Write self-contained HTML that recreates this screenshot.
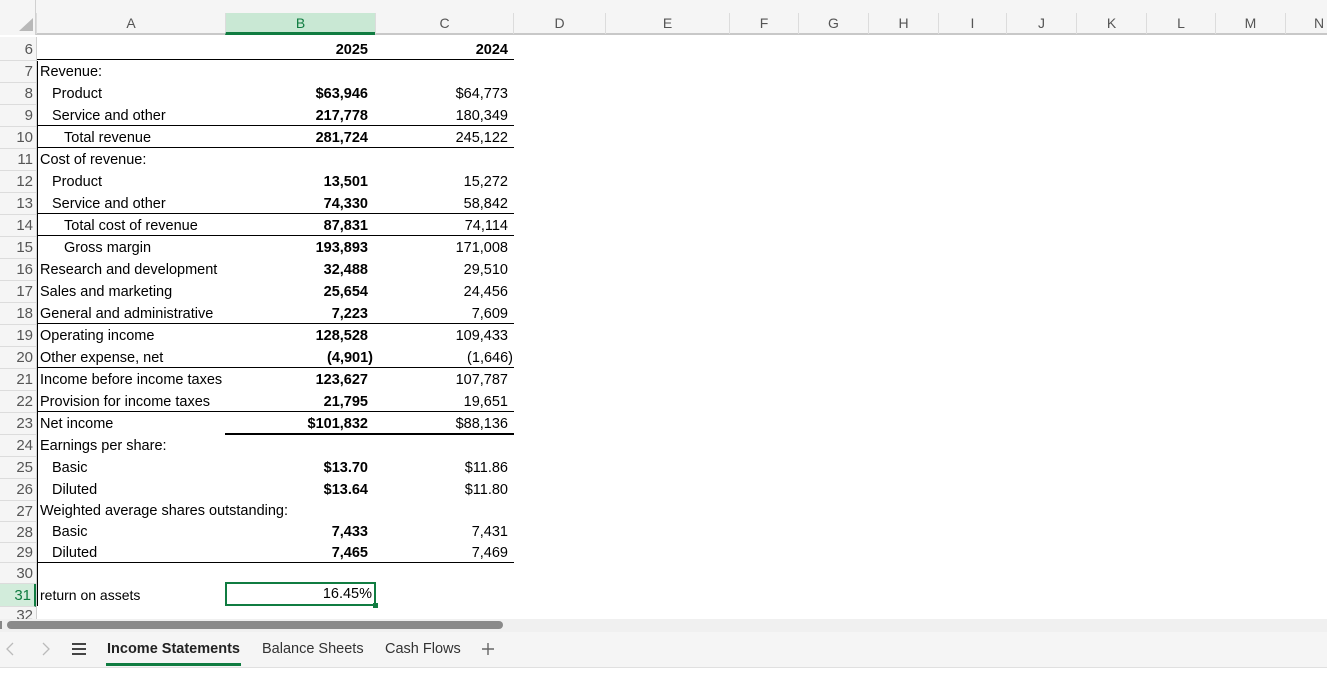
<!DOCTYPE html>
<html><head><meta charset="utf-8"><style>
*{margin:0;padding:0;box-sizing:border-box}
body{width:1327px;height:674px;overflow:hidden;background:#fff;font-family:"Liberation Sans",sans-serif;font-size:14.5px;color:#000;position:relative}
.top{position:absolute;left:0;top:0;width:1327px;height:35px;background:#f5f5f5;border-bottom:2px solid #c8c8c8}
.ch{position:absolute;top:13px;height:21px;line-height:21px;text-align:center;color:#555;font-size:14px;border-left:1px solid #dcdcdc}
.rh{position:absolute;left:0;width:36px;background:#f5f5f5;color:#555;text-align:right;padding-right:3px;border-bottom:1px solid #dcdcdc;font-size:15px}
.c{position:absolute;white-space:nowrap}
.a{left:40px}
.b{left:225px;width:143px;text-align:right;font-weight:bold}
.cc{left:375px;width:133px;text-align:right}
.ln{position:absolute;height:1px;background:#000}
</style></head><body>
<div class="top"></div>
<div style="position:absolute;left:0;top:0;width:36px;height:35px;background:#f5f5f5;border-right:1px solid #d0d0d0"></div>
<svg style="position:absolute;left:18px;top:18px" width="16" height="14"><polygon points="15,0 15,13 1,13" fill="#b8b8b8"/></svg>
<div class="ch" style="left:36px;width:189px">A</div>
<div class="ch" style="left:225px;width:150px;background:#c9e8d4;color:#107c41;border-bottom:3px solid #107c41;height:22px">B</div>
<div class="ch" style="left:375px;width:138px">C</div>
<div class="ch" style="left:513px;width:92px">D</div>
<div class="ch" style="left:605px;width:124px">E</div>
<div class="ch" style="left:729px;width:69px">F</div>
<div class="ch" style="left:798px;width:70px">G</div>
<div class="ch" style="left:868px;width:70px">H</div>
<div class="ch" style="left:938px;width:68px">I</div>
<div class="ch" style="left:1006px;width:70px">J</div>
<div class="ch" style="left:1076px;width:70px">K</div>
<div class="ch" style="left:1146px;width:69px">L</div>
<div class="ch" style="left:1215px;width:70px">M</div>
<div class="ch" style="left:1285px;width:70px;text-align:left;padding-left:28px">N</div>
<div style="position:absolute;left:36px;top:37px;width:1px;height:582px;background:#d0d0d0"></div>
<div style="position:absolute;left:37px;top:61px;width:1px;height:545px;background:#000"></div>

<div class="rh" style="top:37px;height:24px;line-height:26px">6</div>
<div class="c b" style="top:37px;line-height:26px">2025</div><div class="c cc" style="top:37px;line-height:26px;font-weight:bold">2024</div>
<div class="ln" style="left:37px;top:59px;width:477px"></div>

<div class="rh" style="top:61px;height:22px;line-height:22px">7</div><div class="c a" style="top:61px;line-height:22px">Revenue:</div>
<div class="rh" style="top:83px;height:22px;line-height:22px">8</div><div class="c a" style="top:83px;line-height:22px;left:52px">Product</div><div class="c b" style="top:83px;line-height:22px">$63,946</div><div class="c cc" style="top:83px;line-height:22px">$64,773</div>
<div class="rh" style="top:105px;height:22px;line-height:22px">9</div><div class="c a" style="top:105px;line-height:22px;left:52px">Service and other</div><div class="c b" style="top:105px;line-height:22px">217,778</div><div class="c cc" style="top:105px;line-height:22px">180,349</div>
<div class="ln" style="left:37px;top:125px;width:477px"></div>
<div class="rh" style="top:127px;height:22px;line-height:22px">10</div><div class="c a" style="top:127px;line-height:22px;left:64px">Total revenue</div><div class="c b" style="top:127px;line-height:22px">281,724</div><div class="c cc" style="top:127px;line-height:22px">245,122</div>
<div class="ln" style="left:37px;top:147px;width:477px"></div>
<div class="rh" style="top:149px;height:22px;line-height:22px">11</div><div class="c a" style="top:149px;line-height:22px">Cost of revenue:</div>
<div class="rh" style="top:171px;height:22px;line-height:22px">12</div><div class="c a" style="top:171px;line-height:22px;left:52px">Product</div><div class="c b" style="top:171px;line-height:22px">13,501</div><div class="c cc" style="top:171px;line-height:22px">15,272</div>
<div class="rh" style="top:193px;height:22px;line-height:22px">13</div><div class="c a" style="top:193px;line-height:22px;left:52px">Service and other</div><div class="c b" style="top:193px;line-height:22px">74,330</div><div class="c cc" style="top:193px;line-height:22px">58,842</div>
<div class="ln" style="left:37px;top:213px;width:477px"></div>
<div class="rh" style="top:215px;height:22px;line-height:22px">14</div><div class="c a" style="top:215px;line-height:22px;left:64px">Total cost of revenue</div><div class="c b" style="top:215px;line-height:22px">87,831</div><div class="c cc" style="top:215px;line-height:22px">74,114</div>
<div class="ln" style="left:37px;top:235px;width:477px"></div>
<div class="rh" style="top:237px;height:22px;line-height:22px">15</div><div class="c a" style="top:237px;line-height:22px;left:64px">Gross margin</div><div class="c b" style="top:237px;line-height:22px">193,893</div><div class="c cc" style="top:237px;line-height:22px">171,008</div>
<div class="rh" style="top:259px;height:22px;line-height:22px">16</div><div class="c a" style="top:259px;line-height:22px">Research and development</div><div class="c b" style="top:259px;line-height:22px">32,488</div><div class="c cc" style="top:259px;line-height:22px">29,510</div>
<div class="rh" style="top:281px;height:22px;line-height:22px">17</div><div class="c a" style="top:281px;line-height:22px">Sales and marketing</div><div class="c b" style="top:281px;line-height:22px">25,654</div><div class="c cc" style="top:281px;line-height:22px">24,456</div>
<div class="rh" style="top:303px;height:22px;line-height:22px">18</div><div class="c a" style="top:303px;line-height:22px">General and administrative</div><div class="c b" style="top:303px;line-height:22px">7,223</div><div class="c cc" style="top:303px;line-height:22px">7,609</div>
<div class="ln" style="left:37px;top:323px;width:477px"></div>
<div class="rh" style="top:325px;height:22px;line-height:22px">19</div><div class="c a" style="top:325px;line-height:22px">Operating income</div><div class="c b" style="top:325px;line-height:22px">128,528</div><div class="c cc" style="top:325px;line-height:22px">109,433</div>
<div class="rh" style="top:347px;height:22px;line-height:22px">20</div><div class="c a" style="top:347px;line-height:22px">Other expense, net</div><div class="c b" style="top:347px;line-height:22px;width:148px">(4,901)</div><div class="c cc" style="top:347px;line-height:22px;width:138px">(1,646)</div>
<div class="ln" style="left:37px;top:367px;width:477px"></div>
<div class="rh" style="top:369px;height:22px;line-height:22px">21</div><div class="c a" style="top:369px;line-height:22px">Income before income taxes</div><div class="c b" style="top:369px;line-height:22px">123,627</div><div class="c cc" style="top:369px;line-height:22px">107,787</div>
<div class="rh" style="top:391px;height:22px;line-height:22px">22</div><div class="c a" style="top:391px;line-height:22px">Provision for income taxes</div><div class="c b" style="top:391px;line-height:22px">21,795</div><div class="c cc" style="top:391px;line-height:22px">19,651</div>
<div class="ln" style="left:37px;top:411px;width:477px"></div>
<div class="rh" style="top:413px;height:22px;line-height:22px">23</div><div class="c a" style="top:413px;line-height:22px">Net income</div><div class="c b" style="top:413px;line-height:22px">$101,832</div><div class="c cc" style="top:413px;line-height:22px">$88,136</div>
<div class="ln" style="left:225px;top:433px;width:289px;height:2px"></div>
<div class="rh" style="top:435px;height:22px;line-height:22px">24</div><div class="c a" style="top:435px;line-height:22px">Earnings per share:</div>
<div class="rh" style="top:457px;height:22px;line-height:22px">25</div><div class="c a" style="top:457px;line-height:22px;left:52px">Basic</div><div class="c b" style="top:457px;line-height:22px">$13.70</div><div class="c cc" style="top:457px;line-height:22px">$11.86</div>
<div class="rh" style="top:479px;height:22px;line-height:22px">26</div><div class="c a" style="top:479px;line-height:22px;left:52px">Diluted</div><div class="c b" style="top:479px;line-height:22px">$13.64</div><div class="c cc" style="top:479px;line-height:22px">$11.80</div>
<div class="rh" style="top:501px;height:21px;line-height:21px">27</div><div class="c a" style="top:501px;line-height:21px">Weighted average shares outstanding:</div>
<div class="rh" style="top:522px;height:21px;line-height:21px">28</div><div class="c a" style="top:522px;line-height:21px;left:52px">Basic</div><div class="c b" style="top:522px;line-height:21px">7,433</div><div class="c cc" style="top:522px;line-height:21px">7,431</div>
<div class="rh" style="top:543px;height:20px;line-height:20px">29</div><div class="c a" style="top:543px;line-height:20px;left:52px">Diluted</div><div class="c b" style="top:543px;line-height:20px">7,465</div><div class="c cc" style="top:543px;line-height:20px">7,469</div>
<div class="ln" style="left:37px;top:562px;width:477px"></div>
<div class="rh" style="top:563px;height:21px;line-height:21px">30</div>
<div class="rh" style="top:584px;height:23px;line-height:23px;background:#d2ecdb;color:#107c41;border-right:2px solid #107c41">31</div>
<div class="c a" style="top:584px;line-height:23px;font-size:14px">return on assets</div>
<div style="position:absolute;left:225px;top:582px;width:151px;height:24px;border:2px solid #107c41"></div>
<div class="c" style="left:225px;width:147px;text-align:right;top:584px;line-height:21px">16.45%</div>
<div style="position:absolute;left:373px;top:603px;width:5px;height:5px;background:#107c41"></div>
<div class="rh" style="top:607px;height:12px;line-height:18px;overflow:hidden;border:none">32</div>

<div style="position:absolute;left:0;top:619px;width:1327px;height:13px;background:#f0f0f0"></div>
<div style="position:absolute;left:0;top:621px;width:2px;height:8px;background:#888"></div>
<div style="position:absolute;left:7px;top:621px;width:496px;height:8px;border-radius:4px;background:#8a8a8a"></div>
<div style="position:absolute;left:0;top:632px;width:1327px;height:36px;background:#f5f5f5;border-bottom:1px solid #e0e0e0"></div>
<svg style="position:absolute;left:4px;top:642px" width="50" height="14"><path d="M9 1 L3 7 L9 13" fill="none" stroke="#bbb" stroke-width="1.3"/><path d="M39 1 L45 7 L39 13" fill="none" stroke="#bbb" stroke-width="1.3"/></svg>
<div style="position:absolute;left:72px;top:643px;width:14px;height:2px;background:#444"></div>
<div style="position:absolute;left:72px;top:648px;width:14px;height:2px;background:#444"></div>
<div style="position:absolute;left:72px;top:653px;width:14px;height:2px;background:#444"></div>
<div class="c" style="left:107px;top:638px;line-height:22px;font-weight:bold;color:#222">Income Statements</div>
<div style="position:absolute;left:106px;top:663px;width:135px;height:3px;background:#107c41"></div>
<div class="c" style="left:262px;top:638px;line-height:22px;color:#333">Balance Sheets</div>
<div class="c" style="left:385px;top:638px;line-height:22px;color:#333">Cash Flows</div>
<svg style="position:absolute;left:481px;top:642px" width="14" height="14"><path d="M7 1 V13 M1 7 H13" stroke="#666" stroke-width="1.4"/></svg>
</body></html>
